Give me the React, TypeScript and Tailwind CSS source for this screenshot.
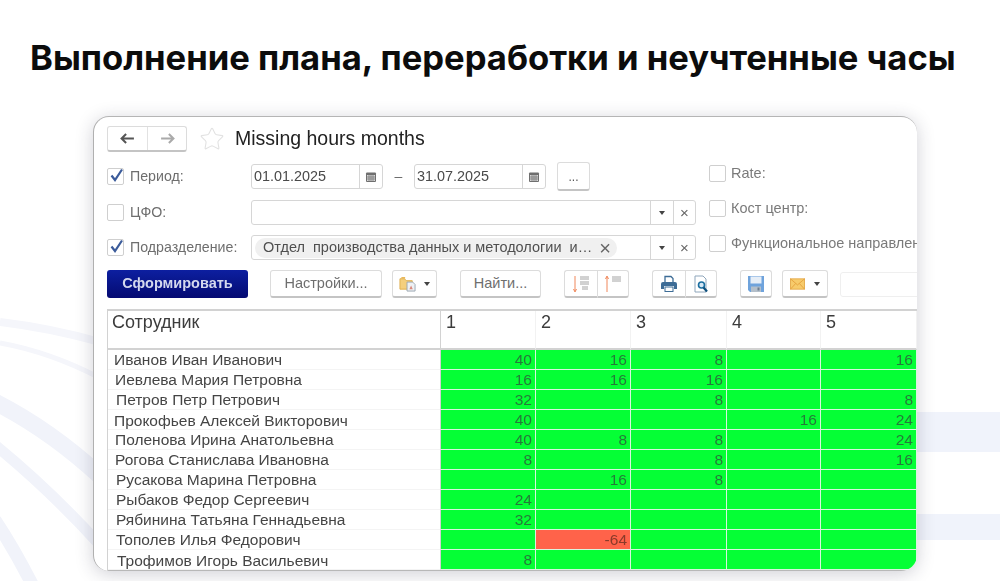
import { Star } from "lucide-react";
import { ReactNode } from "react";

const rows = [
  { name: "Иванов Иван Иванович", indent: "pl-[6px]", nudge: "pt-[1px]", cells: ["40", "16", "8", "", "16"] },
  { name: "Иевлева Мария Петровна", indent: "pl-[7px]", nudge: "pt-[1px]", cells: ["16", "16", "16", "", ""] },
  { name: "Петров Петр Петрович", indent: "pl-[8px]", nudge: "pt-[1px]", cells: ["32", "", "8", "", "8"] },
  { name: "Прокофьев Алексей Викторович", indent: "pl-[6px]", nudge: "pt-[3px]", cells: ["40", "", "", "16", "24"] },
  { name: "Поленова Ирина Анатольевна", indent: "pl-[7px]", nudge: "", cells: ["40", "8", "8", "", "24"] },
  { name: "Рогова Станислава Ивановна", indent: "pl-[7px]", nudge: "pt-[1px]", cells: ["8", "", "8", "", "16"] },
  { name: "Русакова Марина Петровна", indent: "pl-[8px]", nudge: "pt-[1px]", cells: ["", "16", "8", "", ""] },
  { name: "Рыбаков Федор Сергеевич", indent: "pl-[8px]", nudge: "pt-[1px]", cells: ["24", "", "", "", ""] },
  { name: "Рябинина Татьяна Геннадьевна", indent: "pl-[8px]", nudge: "pt-[1px]", cells: ["32", "", "", "", ""] },
  { name: "Тополев Илья Федорович", indent: "pl-[8px]", nudge: "pt-[1px]", cells: ["", "-64", "", "", ""] },
  { name: "Трофимов Игорь Васильевич", indent: "pl-[9px]", nudge: "pt-[3px]", cells: ["8", "", "", "", ""] },
];

function Check({ on }: { on?: boolean }) {
  return (
    <span className="relative block h-[17px] w-[17px] shrink-0 rounded-[2px] border border-[#cfcfcf] bg-white">
      {on && (
        <svg viewBox="0 0 17 17" className="absolute -top-[2px] left-0 h-[17px] w-[17px]">
          <path d="M3.5 8.5 L7 13 L14 2.5" fill="none" stroke="#3b5b9a" strokeWidth="2.2" />
        </svg>
      )}
    </span>
  );
}

function CalendarIcon() {
  return (
    <svg viewBox="0 0 12 12" className="h-3 w-3">
      <rect x="1" y="1.5" width="10" height="9.5" rx="1" fill="#6f6f6f" />
      <rect x="2" y="4" width="8" height="6" fill="#d8d8d8" />
      <path d="M2 6h8M2 8h8M4 4v6M6 4v6M8 4v6" stroke="#6f6f6f" strokeWidth="0.7" />
    </svg>
  );
}

function Caret() {
  return <span className="block h-0 w-0 border-x-[3px] border-t-[4px] border-x-transparent border-t-[#444]" />;
}

function Btn({ className, children }: { className: string; children: ReactNode }) {
  return (
    <div className={`flex h-[28px] shrink-0 items-center justify-center rounded-[3px] border border-b-2 border-[#dcdcdc] border-b-[#c4c4c4] bg-white ${className}`}>
      {children}
    </div>
  );
}

function DropField({ children }: { children?: ReactNode }) {
  return (
    <div className="flex h-[25px] w-[445px] items-center rounded-[3px] border border-[#d6d6d6] bg-white">
      <div className="flex min-w-0 flex-1 items-center overflow-hidden pl-[3px]">{children}</div>
      <div className="flex h-full w-[23px] items-center justify-center border-l border-[#d6d6d6]">
        <Caret />
      </div>
      <div className="flex h-full w-[22px] items-center justify-center border-l border-[#d6d6d6] text-[15px] leading-none text-[#666]">
        ×
      </div>
    </div>
  );
}

function DateField({ value }: { value: string }) {
  return (
    <div className="flex h-[25px] items-center rounded-[3px] border border-[#d6d6d6] bg-white">
      <div className="w-[107px] pl-[2px] text-[14.400px] text-[#4a4a4a]">{value}</div>
      <div className="flex h-full w-[23px] items-center justify-center border-l border-[#d6d6d6]">
        <CalendarIcon />
      </div>
    </div>
  );
}

function SortDownIcon() {
  return (
    <svg viewBox="0 0 20 20" className="h-5 w-5">
      <path d="M4 2v15M2.500 15 4 18l1.500-3" fill="none" stroke="#f0875a" strokeWidth="1" />
      <path d="M9 3h9M9 5h9M9 8h9M9 10h9M11 13h6M11 15h6" stroke="#a4a4a4" strokeWidth="1" />
    </svg>
  );
}

function SortUpIcon() {
  return (
    <svg viewBox="0 0 20 20" className="h-5 w-5">
      <path d="M4 18V3M2.500 5 4 2l1.500 3" fill="none" stroke="#f0875a" strokeWidth="1" />
      <path d="M9 3h9M9 5h9M9 7h9" stroke="#a4a4a4" strokeWidth="1" />
    </svg>
  );
}

function PrintIcon() {
  return (
    <svg viewBox="0 0 18 18" className="h-[18px] w-[18px]">
      <path d="M5 7V1.500h6L13 3.500V7" fill="#fff" stroke="#3d6c96" strokeWidth="1.300" />
      <path d="M1 9a2 2 0 0 1 2-2h12a2 2 0 0 1 2 2v5h-3v-3H4v3H1z" fill="#3d6c96" />
      <rect x="5" y="12" width="8" height="4.500" fill="#fff" stroke="#3d6c96" />
    </svg>
  );
}

function PreviewIcon() {
  return (
    <svg viewBox="0 0 18 18" className="h-[18px] w-[18px]">
      <path d="M3 1h8l3 3v13H3z" fill="#fff" stroke="#8fa6bb" />
      <circle cx="9.500" cy="10" r="3" fill="#d6e8f5" stroke="#1a6ea0" strokeWidth="1.600" />
      <path d="M11.500 12.500 15 16.500" stroke="#0d4f7c" strokeWidth="2.200" />
    </svg>
  );
}

function SaveIcon() {
  return (
    <svg viewBox="0 0 18 18" className="h-[18px] w-[18px]">
      <path d="M1 1h16v16H3l-2-2z" fill="#6fa3dc" />
      <rect x="3.500" y="1.500" width="11" height="7" fill="#e6eef7" />
      <rect x="4" y="11.500" width="10" height="5.500" fill="#b4bfca" />
      <rect x="10.500" y="12.500" width="2" height="3" fill="#6e7f90" />
    </svg>
  );
}

function MailIcon() {
  return (
    <svg viewBox="0 0 16 12" className="h-[12px] w-[15px]">
      <rect x="0.500" y="0.500" width="15" height="11" fill="#f7cb6b" stroke="#e5ab4c" />
      <path d="M0.500 0.500 8 7l7.500-6.500M0.500 11.500 6 5.500M15.500 11.500 10 5.500" fill="none" stroke="#e5a23f" />
    </svg>
  );
}

function FolderIcon() {
  return (
    <svg viewBox="0 0 18 18" className="h-[17px] w-[17px]">
      <path d="M1 4h5l1.500 2H14v9H1z" fill="#f4cf7d" stroke="#dfae4f" />
      <path d="M2.500 2h4v2h-4z" fill="#e9b95c" />
      <path d="M8.500 7.500h6l2.500 2.500v7H8.500z" fill="#eef1f4" stroke="#9aa6b0" />
      <path d="M11 15l1.800-4 1.800 4z" fill="#d98a7e" />
    </svg>
  );
}

export default function App() {
  return (
    <div className="relative flex h-[581px] w-[1000px] flex-col overflow-hidden bg-white font-['Liberation_Sans',Arial,sans-serif]">
      {/* faded rings of the slide background */}
      <svg viewBox="0 0 1000 581" className="absolute inset-0 h-full w-full">
        <g fill="none">
          <path d="M0 322 Q50 328 100 342" stroke="#f5f6fb" strokeWidth="8" />
          <path d="M0 343 Q50 352 100 378" stroke="#f5f6fb" strokeWidth="5" />
          <path d="M-5 402 Q50 430 100 476" stroke="#f1f3fa" strokeWidth="17" />
          <path d="M-5 445 Q50 490 100 545" stroke="#f1f3fa" strokeWidth="11" />
          <path d="M-5 520 Q15 550 35 590" stroke="#f1f3fa" strokeWidth="13" />
        </g>
        <rect x="910" y="412" width="90" height="40" fill="#f0f3fb" />
        <rect x="910" y="514" width="90" height="26" fill="#f0f3fb" />
      </svg>

      <h1 className="relative mt-[36px] whitespace-nowrap pl-[30px] font-['Inter',sans-serif] text-[34.600px] leading-[42px] font-bold text-[#0c0c0c]">
        Выполнение плана, переработки и неучтенные часы
      </h1>

      <div className="relative mt-[38px] ml-[93px] flex h-[455px] w-[824px] flex-col overflow-hidden rounded-[16px] border-t border-l border-t-[#b5b5b5] border-l-[#b0b0b0] bg-white pt-[8px] pl-[13px] shadow-[0_3px_18px_rgba(40,40,70,0.22)] blur-[0.35px]">
        <div className="flex h-[27px] items-center">
          <div className="flex h-[26px] w-[80px] items-center rounded-[3px] border border-b-2 border-[#dcdcdc] border-b-[#c4c4c4]">
            <div className="flex h-full w-[40px] items-center justify-center border-r border-[#e2e2e2] text-[#555]">
              <svg viewBox="0 0 16 12" className="h-[11px] w-[15px]">
                <path d="M1 6h14M6.500 1 1.500 6l5 5" fill="none" stroke="#555" strokeWidth="2.200" />
              </svg>
            </div>
            <div className="flex h-full flex-1 items-center justify-center">
              <svg viewBox="0 0 16 12" className="h-[11px] w-[15px]">
                <path d="M1 6h14M9.500 1l5 5-5 5" fill="none" stroke="#aaa" strokeWidth="2.200" />
              </svg>
            </div>
          </div>
          <Star className="ml-[12px] h-[26px] w-[26px] text-[#e2e2e2]" strokeWidth={1} />
          <div className="ml-[10px] text-[19.500px] text-[#222]">Missing hours months</div>
        </div>

        <div className="mt-[12px] flex">
          <div className="flex w-[602px] shrink-0 flex-col">
            <div className="flex h-[25px] items-center">
              <Check on />
              <div className="ml-[6px] w-[121px] text-[14.200px] text-[#6e6e6e]">Период:</div>
              <DateField value="01.01.2025" />
              <div className="w-[31px] text-center text-[14px] text-[#6e6e6e]">–</div>
              <DateField value="31.07.2025" />
              <Btn className="ml-[11px] -mt-[1px] h-[29px] w-[33px]">
                <span className="mt-[3px] text-[12px] leading-none text-[#555]">...</span>
              </Btn>
            </div>
            <div className="mt-[11px] flex h-[25px] items-center">
              <Check />
              <div className="ml-[6px] w-[121px] text-[14.200px] text-[#6e6e6e]">ЦФО:</div>
              <DropField />
            </div>
            <div className="mt-[10px] flex h-[25px] items-center">
              <Check on />
              <div className="ml-[6px] w-[121px] text-[14.200px] whitespace-nowrap text-[#6e6e6e]">Подразделение:</div>
              <DropField>
                <div className="flex h-[20px] w-[362px] items-center rounded-full bg-[#f0f0f0] pl-[8px] text-[14.500px] whitespace-nowrap text-[#4f4f4f]">
                  Отдел&nbsp; производства данных и методологии&nbsp; и…
                  <span className="ml-[7px] text-[20px] leading-none font-light text-[#666]">×</span>
                </div>
              </DropField>
            </div>
          </div>
          <div className="mt-[1px] flex flex-col gap-[18px]">
            {["Rate:", "Кост центр:", "Функциональное направление:"].map((label) => (
              <div key={label} className="flex h-[17px] items-center whitespace-nowrap">
                <Check />
                <div className="ml-[5px] text-[14.500px] text-[#7a7a7a]">{label}</div>
              </div>
            ))}
          </div>
        </div>

        <div className="mt-[10px] flex items-start whitespace-nowrap text-[14.500px] text-[#6e6e6e]">
          <div className="flex h-[28px] w-[141px] shrink-0 items-center justify-center rounded-[3px] bg-gradient-to-b from-[#0d1fa0] to-[#050a72] font-bold text-[#d4d8ee]">
            Сформировать
          </div>
          <Btn className="ml-[22px] w-[112px]">Настройки...</Btn>
          <Btn className="ml-[10px] w-[45px] gap-[8px]">
            <FolderIcon />
            <Caret />
          </Btn>
          <Btn className="ml-[23px] w-[81px]">Найти...</Btn>
          <div className="ml-[23px] flex">
            <Btn className="w-[33px] rounded-r-none border-r-0">
              <SortDownIcon />
            </Btn>
            <Btn className="w-[32px] rounded-l-none">
              <SortUpIcon />
            </Btn>
          </div>
          <div className="ml-[23px] flex">
            <Btn className="w-[33px] rounded-r-none border-r-0">
              <PrintIcon />
            </Btn>
            <Btn className="w-[32px] rounded-l-none">
              <PreviewIcon />
            </Btn>
          </div>
          <Btn className="ml-[23px] w-[32px]">
            <SaveIcon />
          </Btn>
          <Btn className="ml-[10px] w-[46px] gap-[9px]">
            <MailIcon />
            <Caret />
          </Btn>
          <div className="mt-[2px] ml-[12px] h-[25px] w-[100px] shrink-0 rounded-[3px] border border-[#efefef]" />
        </div>

        <div className="mt-[11px] grid h-[263px] grid-cols-[333px_95px_95px_96px_94px_96px] grid-rows-[39px_repeat(11,20px)] border-t-2 border-b-2 border-l border-t-[#d2d2d2] border-b-[#b8b8b8] border-l-[#d2d2d2]">
          <div className="border-r border-b-2 border-[#d2d2d2] pl-[4px] text-[18px] leading-[22px] text-[#3c3c3c]">Сотрудник</div>
          {["1", "2", "3", "4", "5"].map((day) => (
            <div key={day} className="border-r border-b-2 border-r-[#f2f2f2] border-b-[#d2d2d2] pl-[5px] text-[18px] leading-[22px] text-[#3c3c3c]">
              {day}
            </div>
          ))}
          {rows.map((row) => (
            <div key={row.name} className="contents">
              <div className={`flex items-center border-b border-r border-b-[#f4f4f4] border-r-[#d2d2d2] text-[15.500px] leading-none whitespace-nowrap text-[#454545] ${row.indent} ${row.nudge}`}>
                {row.name}
              </div>
              {row.cells.map((value, i) => (
                <div
                  key={i}
                  className={`flex items-center justify-end border-r border-b border-[#d9f5de] pr-[3px] text-[15.500px] leading-none ${
                    value.startsWith("-") ? "bg-[#ff634a] text-[#8a3a2a]" : "bg-[#05ff35] text-[#257a3a]"
                  }`}
                >
                  {value}
                </div>
              ))}
            </div>
          ))}
        </div>
      </div>
    </div>
  );
}
